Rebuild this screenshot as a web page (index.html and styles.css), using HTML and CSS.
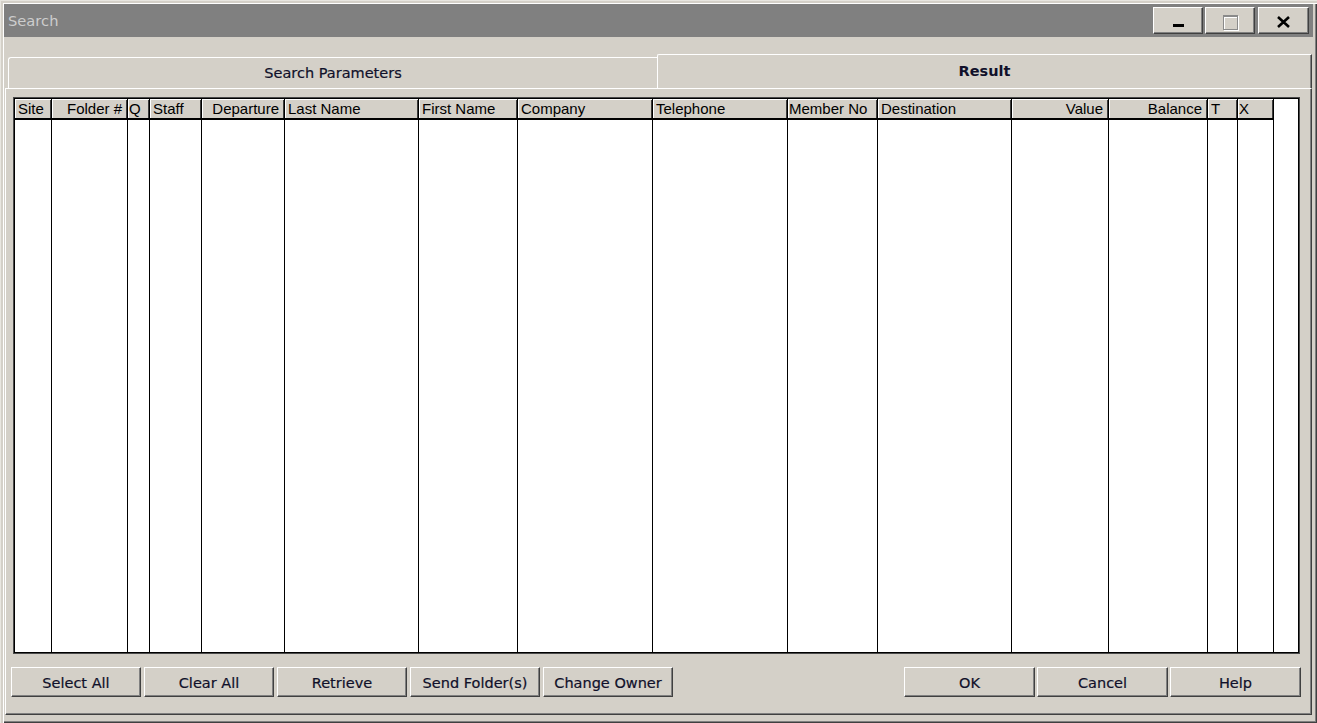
FILE: index.html
```html
<!DOCTYPE html>
<html lang="en">
<head>
<meta charset="utf-8">
<title>Search</title>
<link rel="stylesheet" href="styles.css">
</head>
<body>
<div class="window">
  <div class="titlebar">
    <span class="title">Search</span>
    <div class="tbtns">
      <div class="tbtn tbtn-min"><span class="minbar"></span></div>
      <div class="tbtn tbtn-max"><span class="maxbox"></span></div>
      <div class="tbtn tbtn-close">
        <svg class="xicon" width="15" height="12" viewBox="0 0 15 12">
          <path d="M2 1 L13 11 M13 1 L2 11" stroke="#000" stroke-width="2.6" fill="none"/>
        </svg>
      </div>
    </div>
  </div>
  <div class="client">
    <div class="tabs">
      <div class="tab tab-inactive">Search Parameters</div>
      <div class="tab tab-active">Result</div>
    </div>
    <div class="panel">
      <div class="table">
        <div class="grid">
          <div class="hcell">Site</div>
          <div class="hcell right">Folder #</div>
          <div class="hcell tight">Q</div>
          <div class="hcell">Staff</div>
          <div class="hcell right">Departure</div>
          <div class="hcell">Last Name</div>
          <div class="hcell">First Name</div>
          <div class="hcell">Company</div>
          <div class="hcell">Telephone</div>
          <div class="hcell tight">Member No</div>
          <div class="hcell">Destination</div>
          <div class="hcell right">Value</div>
          <div class="hcell right">Balance</div>
          <div class="hcell">T</div>
          <div class="hcell tight">X</div>
          <div class="hfill"></div>

          <div class="bcell"></div>
          <div class="bcell"></div>
          <div class="bcell"></div>
          <div class="bcell"></div>
          <div class="bcell"></div>
          <div class="bcell"></div>
          <div class="bcell"></div>
          <div class="bcell"></div>
          <div class="bcell"></div>
          <div class="bcell"></div>
          <div class="bcell"></div>
          <div class="bcell"></div>
          <div class="bcell"></div>
          <div class="bcell"></div>
          <div class="bcell"></div>
          <div class="bfill"></div>
        </div>
      </div>
      <div class="buttonbar">
        <div class="group group-left">
          <div class="btn">Select All</div>
          <div class="btn">Clear All</div>
          <div class="btn">Retrieve</div>
          <div class="btn">Send Folder(s)</div>
          <div class="btn">Change Owner</div>
        </div>
        <div class="group group-right">
          <div class="btn">OK</div>
          <div class="btn">Cancel</div>
          <div class="btn">Help</div>
        </div>
      </div>
    </div>
  </div>
</div>
</body>
</html>
```
FILE: styles.css
```css
html, body {
  margin: 0;
  padding: 0;
  background: #d4d0c8;
}

body {
  font-family: "DejaVu Sans", "Liberation Sans", sans-serif;
  color: #14142a;
}

.window {
  width: 1317px;
  height: 723px;
  box-sizing: border-box;
  padding: 4px;
  display: flex;
  flex-direction: column;
  background: #d4d0c8;
  box-shadow: inset 1px 1px #e8e6e0, inset 3px 3px #d4d0c8, inset 4px 4px #ffffff,
              inset -1px -1px #404040, inset -2px -2px #808080;
}

/* Title bar */
.titlebar {
  height: 33px;
  flex: none;
  background: #808080;
  display: flex;
  align-items: flex-start;
}

.title {
  color: #cdcdcd;
  font-size: 14.7px;
  line-height: 33px;
  padding-left: 4px;
}

.tbtns {
  margin-left: auto;
  margin-top: 3px;
  margin-right: 4px;
  display: flex;
}

.tbtn {
  height: 27px;
  box-sizing: border-box;
  background: #d4d0c8;
  border-top: 1px solid #ffffff;
  border-left: 1px solid #ffffff;
  border-right: 1px solid #404040;
  border-bottom: 1px solid #404040;
  box-shadow: inset -1px -1px #808080;
  display: flex;
  justify-content: center;
}

.tbtn-min {
  width: 50px;
  align-items: flex-end;
  padding-bottom: 6px;
}

.tbtn-max {
  width: 50px;
  margin-left: 2px;
  align-items: center;
  padding-top: 3px;
}

.tbtn-close {
  width: 51px;
  margin-left: 3px;
  align-items: center;
  padding-top: 3px;
}

.minbar {
  display: block;
  width: 11px;
  height: 3px;
  background: #000;
}

.maxbox {
  display: block;
  width: 15px;
  height: 15px;
  box-sizing: border-box;
  border: 1px solid #8a8a8a;
  border-top-width: 2px;
  box-shadow: 1px 1px #ffffff, inset 1px 1px #ffffff;
}

.xicon {
  display: block;
}

/* Client area */
.client {
  flex: 1;
  display: flex;
  flex-direction: column;
  padding: 17px 1px 4px 1px;
  min-height: 0;
}

.tabs {
  height: 34px;
  flex: none;
  display: flex;
  align-items: flex-end;
  padding-left: 3px;
}

.tab {
  box-sizing: border-box;
  text-align: center;
  font-size: 14.5px;
  color: #10102a;
  white-space: nowrap;
  -webkit-text-stroke: 0.2px #10102a;
}

.tab-inactive {
  width: 649px;
  height: 31px;
  line-height: 30px;
  border-top: 1px solid #ffffff;
  border-left: 1px solid #ffffff;
  border-top-left-radius: 3px;
}

.tab-active {
  flex: 1;
  height: 34px;
  line-height: 33px;
  font-weight: bold;
  -webkit-text-stroke: 0;
  border-top: 1px solid #ffffff;
  border-left: 1px solid #ffffff;
  border-right: 1px solid #404040;
  border-top-left-radius: 2px;
  box-shadow: inset -1px 0 #808080;
}

.panel {
  flex: 1;
  min-height: 0;
  display: flex;
  flex-direction: column;
  border-top: 1px solid #ffffff;
  border-left: 1px solid #ffffff;
  border-right: 1px solid #404040;
  border-bottom: 1px solid #404040;
  box-shadow: inset -1px -1px #808080;
  padding: 8px 0 17px 0;
}

/* Table */
.table {
  flex: 1;
  min-height: 0;
  margin: 0 11px 0 7px;
  border: 1px solid #4a4a4a;
  display: flex;
}

.grid {
  flex: 1;
  border: 1px solid #000;
  background: #ffffff;
  display: grid;
  grid-template-columns: 37px 76px 22px 52px 83px 134px 99px 135px 135px 90px 134px 97px 99px 30px 36px 1fr;
  grid-template-rows: 21px 1fr;
}

.hcell {
  box-sizing: border-box;
  background: #d4d0c8;
  border-right: 1px solid #000;
  border-bottom: 2px solid #000;
  box-shadow: inset 1px 1px #ffffff, inset -1px 0 #3c3c3c;
  font-family: "Liberation Sans", Arial, sans-serif;
  font-size: 15px;
  line-height: 19px;
  color: #000;
  padding: 0 3px;
  white-space: nowrap;
  overflow: hidden;
}

.hcell.right {
  text-align: right;
  padding-right: 5px;
}

.hcell.tight {
  padding-left: 1px;
}

.hfill {
  background: #ffffff;
}

.bcell {
  border-right: 1px solid #000;
  background: #ffffff;
}

.bfill {
  background: #ffffff;
}

/* Buttons */
.buttonbar {
  flex: none;
  margin: 13px 10px 0 5px;
  display: flex;
  justify-content: space-between;
}

.group {
  display: flex;
}

.group-left {
  gap: 3px;
}

.group-right {
  gap: 2px;
}

.btn {
  height: 30px;
  box-sizing: border-box;
  background: #d4d0c8;
  border-top: 1px solid #ffffff;
  border-left: 1px solid #ffffff;
  border-right: 1px solid #404040;
  border-bottom: 1px solid #404040;
  box-shadow: inset -1px -1px #808080;
  font-size: 14.5px;
  line-height: 29px;
  padding-top: 1px;
  text-align: center;
  color: #10102a;
  -webkit-text-stroke: 0.2px #10102a;
  white-space: nowrap;
}

.group-left .btn {
  width: 130px;
}

.group-right .btn {
  width: 131px;
}
```
